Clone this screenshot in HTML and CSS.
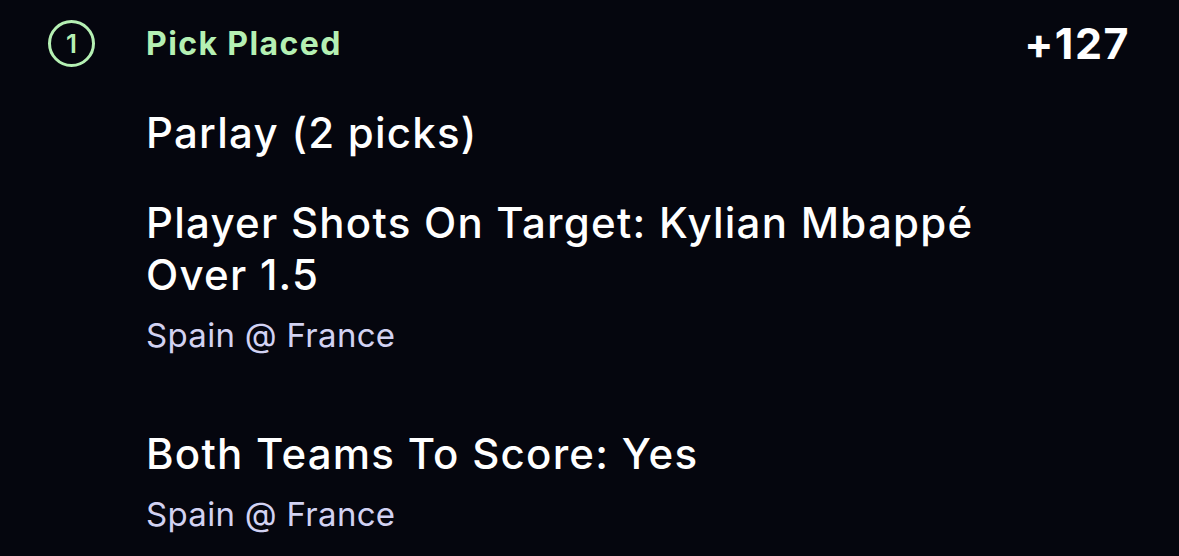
FILE: index.html
```html
<!DOCTYPE html>
<html>
<head>
<meta charset="utf-8">
<link rel="stylesheet" href="styles.css">
</head>
<body>
<div class="card">
  <div class="header">
    <div class="step">1</div>
    <div class="status">Pick Placed</div>
    <div class="odds">+127</div>
  </div>
  <div class="body">
    <div class="type">Parlay (2 picks)</div>
    <div class="leg">
      <div class="market">Player Shots On Target: Kylian Mbappé Over 1.5</div>
      <div class="event">Spain @ France</div>
    </div>
    <div class="leg">
      <div class="market">Both Teams To Score: Yes</div>
      <div class="event">Spain @ France</div>
    </div>
  </div>
</div>
</body>
</html>
```
FILE: styles.css
```css
html, body {
  margin: 0;
  padding: 0;
  background: #05060e;
}
body {
  font-family: Inter, "Noto Sans", sans-serif;
  color: #ffffff;
  width: 1179px;
  height: 556px;
  overflow: hidden;
}
.card {
  padding: 19px 49px 0 48px;
}
.header {
  display: flex;
  align-items: center;
  height: 48px;
}
.step {
  width: 41px;
  height: 41px;
  border: 3px solid #b5f0b3;
  border-radius: 50%;
  color: #b5f0b3;
  font-size: 26px;
  font-weight: 600;
  display: flex;
  align-items: center;
  justify-content: center;
  flex: none;
}
.status {
  margin-left: 51px;
  font-size: 32px;
  font-weight: 700;
  letter-spacing: 1.4px;
  color: #b5f0b3;
  flex: 1;
}
.odds {
  font-size: 43px;
  font-weight: 700;
  letter-spacing: 1.5px;
  color: #ffffff;
}
.body {
  padding-left: 98px;
}
.type {
  margin-top: 40px;
  font-size: 42px;
  font-weight: 500;
  letter-spacing: 1.25px;
  line-height: 52px;
}
.leg {
  margin-top: 38px;
}
.leg + .leg {
  margin-top: 73px;
}
.market {
  font-size: 42px;
  font-weight: 500;
  letter-spacing: 1.25px;
  line-height: 52px;
  max-width: 860px;
}
.event {
  margin-top: 14px;
  font-size: 33px;
  font-weight: 400;
  letter-spacing: 0.3px;
  color: #d2d2f2;
  line-height: 40px;
}
```
